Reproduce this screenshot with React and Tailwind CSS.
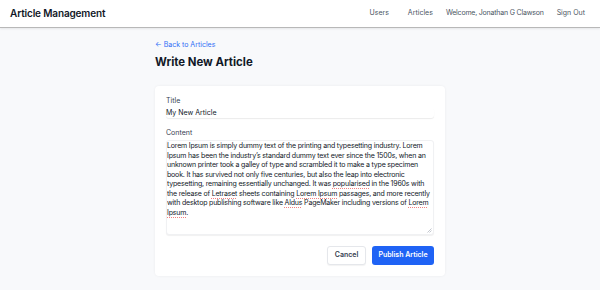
import React from "react";

function S({ children }) {
  return (
    <span className="underline decoration-[#f08080] decoration-dotted decoration-[1px] underline-offset-[1.5px]">
      {children}
    </span>
  );
}

const lines = [
  <>Lorem Ipsum is simply dummy text of the printing and typesetting industry. Lorem</>,
  <>Ipsum has been the industry’s standard dummy text ever since the 1500s, when an</>,
  <>unknown printer took a galley of type and scrambled it to make a type specimen</>,
  <>book. It has survived not only five centuries, but also the leap into electronic</>,
  <>typesetting, remaining essentially unchanged. It was <S>popularised</S> in the 1960s with</>,
  <>the release of <S>Letraset</S> sheets containing <S>Lorem Ipsum</S> passages, and more recently</>,
  <>with desktop publishing software like <S>Aldus</S> PageMaker including versions of <S>Lorem</S></>,
  <><S>Ipsum</S>.</>,
];

export default function App() {
  return (
    <div
      className="min-h-[290px] w-[600px] bg-[#f8f9fb] text-[#1f2937]"
      style={{ fontFamily: "Inter, 'Liberation Sans', sans-serif" }}
    >
      <header className="flex h-[28px] items-center justify-between border-b border-[#b8b8b8] bg-white pl-[10px] pr-[15px] shadow-[0_1px_2px_rgba(0,0,0,0.08)]">
        <div className="text-[10px] font-semibold tracking-[-0.15px] text-[#111827]">Article Management</div>
        <nav className="flex items-center gap-[13px] text-[7px] text-[#4b5563]">
          <span className="mr-[6px]">Users</span>
          <span>Articles</span>
          <span className="tracking-[-0.2px]">Welcome, Jonathan G Clawson</span>
          <span>Sign Out</span>
        </nav>
      </header>
      <main className="mx-auto w-[290px] pt-[12px]">
        <div className="text-[7px] leading-[10px] text-[#2f6df6]">← Back to Articles</div>
        <h1 className="mt-[4px] text-[11.4px] font-bold leading-[17px] text-[#111827]">Write New Article</h1>
        <div className="mt-[15px] rounded-[4px] bg-white px-[11px] pb-[11px] pt-[10px] shadow-[0_0_3px_rgba(0,0,0,0.06)]">
          <div className="text-[7px] leading-[10px] text-[#374151]">Title</div>
          <div className="mt-[2px] h-[10px] w-full rounded-[3px] bg-white text-[7px] leading-[10px] text-[#111827] shadow-[0_1px_1px_rgba(0,0,0,0.08)]">
            My New Article
          </div>
          <div className="mt-[10px] text-[7px] leading-[10px] text-[#374151]">Content</div>
          <div className="relative mt-[2px] h-[95px] w-full overflow-hidden rounded-[3px] border border-[#f0f1f3] bg-white text-[7px] leading-[9.55px] tracking-[-0.18px] text-[#111827] shadow-[0_1px_1px_rgba(0,0,0,0.06)]">
            {lines.map((l, i) => (
              <div key={i} className="whitespace-nowrap">
                {l}
              </div>
            ))}
            <svg className="absolute bottom-[1px] right-[1px]" width="5" height="5" viewBox="0 0 5 5">
              <path d="M4.5 0.5 L0.5 4.5 M4.5 2.5 L2.5 4.5" stroke="#9ca3af" strokeWidth="0.6" />
            </svg>
          </div>
          <div className="mt-[11px] flex justify-end gap-[6px]">
            <button className="h-[19px] w-[39px] rounded-[3px] border border-[#e5e7eb] bg-white text-[7px] font-semibold text-[#374151] shadow-[0_1px_1px_rgba(0,0,0,0.05)]">
              Cancel
            </button>
            <button className="h-[19px] w-[62px] rounded-[3px] bg-[#1f63f5] text-[7px] font-semibold text-white">
              Publish Article
            </button>
          </div>
        </div>
      </main>
    </div>
  );
}
